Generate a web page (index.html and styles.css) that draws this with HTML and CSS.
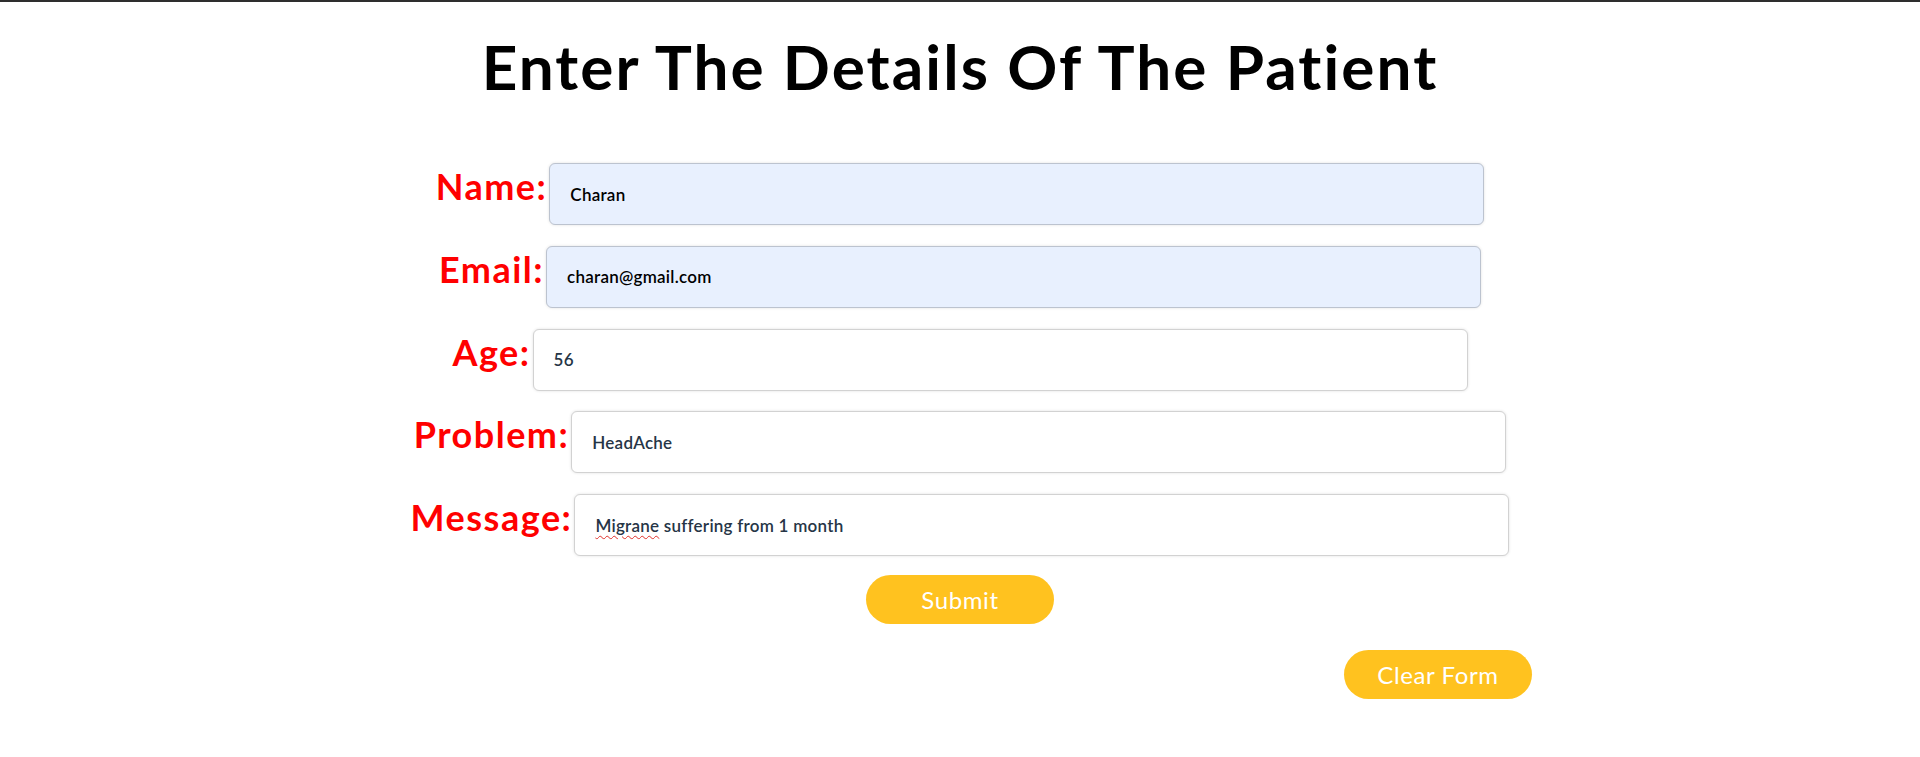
FILE: index.html
```html
<!DOCTYPE html>
<html lang="en">
<head>
<meta charset="utf-8">
<title>Patient Details</title>
<link rel="stylesheet" href="styles.css">
</head>
<body>
<div class="topbar"></div>
<main class="page">
  <h1 class="title">Enter The Details Of The Patient</h1>
  <form class="form">
    <div class="row">
      <label class="label" for="name">Name:</label>
      <input class="field autofill" id="name" type="text" value="Charan">
    </div>
    <div class="row">
      <label class="label" for="email">Email:</label>
      <input class="field autofill" id="email" type="email" value="charan@gmail.com">
    </div>
    <div class="row">
      <label class="label" for="age">Age:</label>
      <input class="field" id="age" type="text" value="56">
    </div>
    <div class="row">
      <label class="label" for="problem">Problem:</label>
      <input class="field" id="problem" type="text" value="HeadAche">
    </div>
    <div class="row">
      <label class="label" for="message">Message:</label>
      <div class="field textfield" id="message" role="textbox" contenteditable="true"><span class="misspelled">Migrane</span> suffering from 1 month</div>
    </div>
    <div class="actions">
      <button class="btn" type="submit">Submit</button>
    </div>
    <div class="actions-right">
      <button class="btn" type="reset">Clear Form</button>
    </div>
  </form>
</main>
</body>
</html>
```
FILE: styles.css
```css
* { box-sizing: border-box; }

html, body {
  margin: 0;
  padding: 0;
  background: #ffffff;
}

body {
  font-family: "Lato", "Noto Sans", sans-serif;
  color: #000;
}

.topbar {
  height: 2px;
  background: #2e2e2e;
}

.page {
  display: flex;
  flex-direction: column;
  align-items: center;
}

.title {
  margin: 26px 0 0;
  font-size: 62px;
  line-height: 76px;
  font-weight: 700;
  color: #000;
  letter-spacing: 2.1px;
}

.form {
  margin-top: 59px;
  width: 1144px;
  display: flex;
  flex-direction: column;
  align-items: center;
  gap: 20.75px;
}

.row {
  display: flex;
  align-items: flex-start;
  gap: 2px;
}

.label {
  color: #ff0000;
  font-size: 36px;
  line-height: 46px;
  font-weight: 700;
  letter-spacing: 1.5px;
}

.field {
  width: 935px;
  height: 62px;
  padding: 0 20px;
  border: 1px solid #d2d2d2;
  border-radius: 6px;
  background: #ffffff;
  box-shadow: 0 0 3px rgba(0, 0, 0, 0.12);
  font-family: "Lato", "Noto Sans", sans-serif;
  font-size: 17px;
  font-weight: 600;
  letter-spacing: 0.25px;
  color: #263546;
  outline: none;
}

.autofill {
  background: #e8f0fe;
  border-color: #bcc3cf;
  color: #000;
}

.textfield {
  display: flex;
  align-items: center;
  white-space: pre;
}

.misspelled {
  text-decoration: underline wavy #e0302a;
  text-decoration-thickness: 1px;
  text-underline-offset: 3px;
}

.actions {
  margin-top: -1.75px;
  display: flex;
  justify-content: center;
  width: 100%;
}

.actions-right {
  margin-top: 5px;
  display: flex;
  justify-content: flex-end;
  width: 100%;
}

.btn {
  width: 188px;
  height: 49px;
  border: none;
  border-radius: 25px;
  background: #ffc21f;
  color: #ffffff;
  font-family: "Lato", "Noto Sans", sans-serif;
  font-size: 24px;
  font-weight: 400;
  letter-spacing: 0.6px;
  cursor: pointer;
}
```
